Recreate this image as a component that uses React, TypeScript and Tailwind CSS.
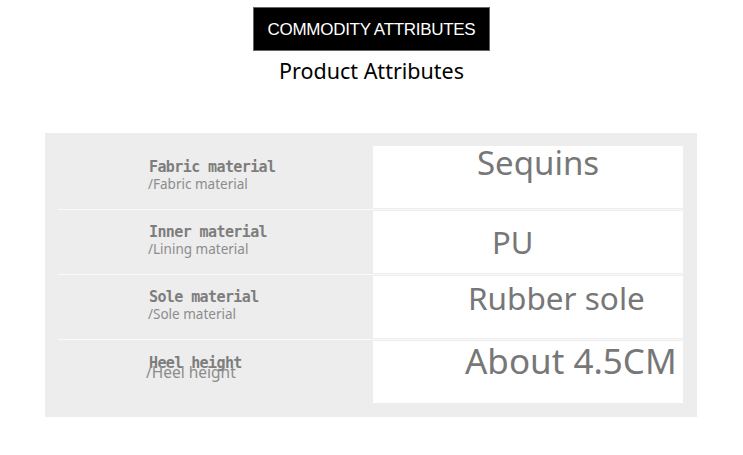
import React from "react";

type Row = {
  title: string;
  sub: string;
  value: string;
  valueBox: string;
};

const rows: Row[] = [
  {
    title: "Fabric material",
    sub: "/Fabric material",
    value: "Sequins",
    valueBox: "pl-[104px] pt-[0px] text-[33px]",
  },
  {
    title: "Inner material",
    sub: "/Lining material",
    value: "PU",
    valueBox: "pl-[119px] pt-[16px] text-[31px]",
  },
  {
    title: "Sole material",
    sub: "/Sole material",
    value: "Rubber sole",
    valueBox: "pl-[95px] pt-[6px] text-[31.5px]",
  },
  {
    title: "Heel height",
    sub: "/Heel height",
    value: "About 4.5CM",
    valueBox: "pl-[92px] pt-[2px] text-[35px]",
  },
];

export default function App() {
  return (
    <div className="w-[743px] h-[455px] bg-white overflow-hidden relative">
      <div className="flex flex-col items-center pt-[7px]">
        <div className="w-[237px] h-[44px] bg-black border border-[#666] flex items-center justify-center">
          <span
            className="text-white text-[17px] tracking-[-0.3px] leading-none"
            style={{ fontFamily: "'Liberation Sans', Arial, sans-serif" }}
          >
            COMMODITY ATTRIBUTES
          </span>
        </div>
        <div
          className="mt-[6px] text-[21.5px] leading-[28px] text-black"
          style={{ fontFamily: "'Noto Sans', 'Open Sans', sans-serif" }}
        >
          Product Attributes
        </div>
      </div>

      <div className="ml-[45px] mt-[48px] w-[652px] h-[284px] bg-[#ededed] pt-[13px] pl-[13px] pr-[14px]">
        {rows.map((r, i) => (
          <div key={i} className="flex flex-col">
            <div className="flex h-[62px]">
              <div className={`w-[315px] pl-[91px] ${i === 3 ? "pt-[14px]" : "pt-[12px]"}`}>
                <div
                  className={`text-[15px] font-bold tracking-[-0.6px] text-[#7d7d7d] ${i === 3 ? "leading-[16px]" : "leading-[18px]"}`}
                  style={{ fontFamily: "'DejaVu Sans Mono', monospace" }}
                >
                  {r.title}
                </div>
                <div
                  className={`text-[#8c8c8c] leading-[16px] ${i === 3 ? "-ml-[3px] -mt-[7px] text-[15.5px]" : "-ml-[1px] text-[13.5px]"}`}
                  style={{ fontFamily: "'Noto Sans', 'Open Sans', sans-serif" }}
                >
                  {r.sub}
                </div>
              </div>
              <div className="w-[310px] bg-white">
                <div
                  className={`${r.valueBox} text-[#777777] leading-none`}
                  style={{ fontFamily: "'Noto Sans', 'Open Sans', sans-serif" }}
                >
                  {r.value}
                </div>
              </div>
            </div>
            {i < rows.length - 1 && (
              <div className="h-[3px] flex flex-col justify-center">
                <div className="h-[1px] bg-[#fafafa]" />
              </div>
            )}
          </div>
        ))}
      </div>
    </div>
  );
}
